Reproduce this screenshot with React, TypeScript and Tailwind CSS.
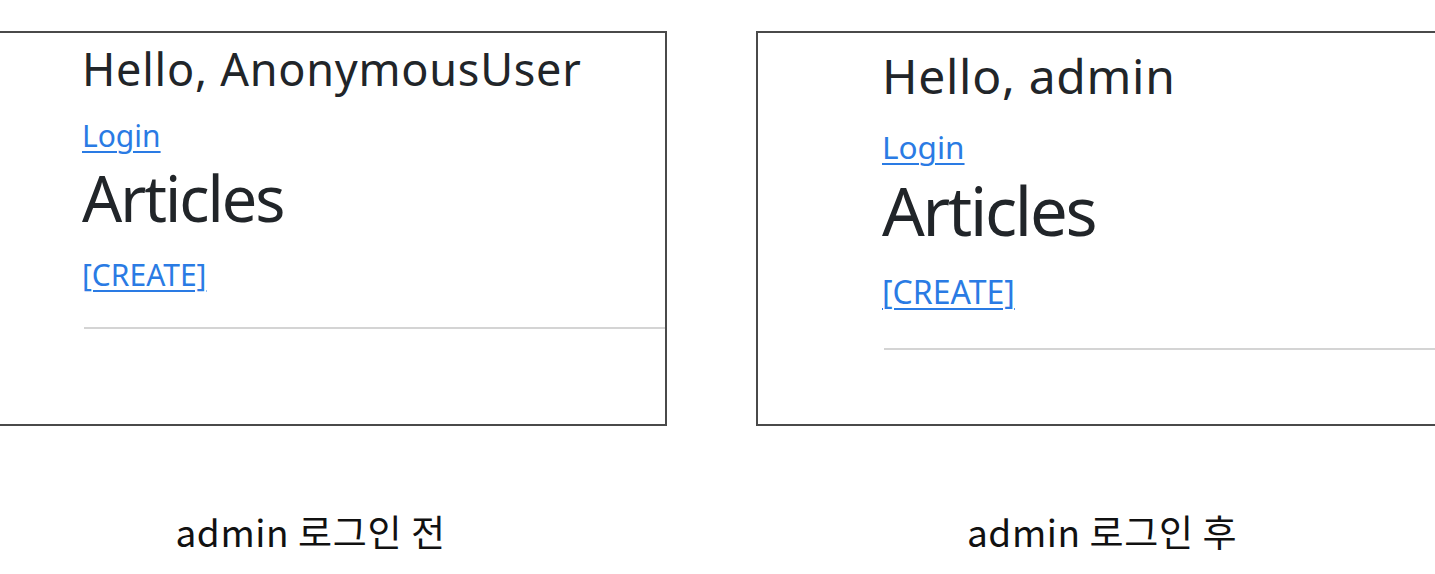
const panelFont = { fontFamily: '"Noto Sans", "Open Sans", sans-serif' };
const captionFont = { fontFamily: '"Noto Sans CJK KR", "Noto Sans", sans-serif' };

function BeforePanel() {
  return (
    <div className="flex flex-col w-[713px] -ml-[46px] shrink-0">
      <div className="h-[395px] border-2 border-[#4a4a4a] bg-white pl-[126px] pt-[9px]" style={panelFont}>
        <h3 className="text-[45px] leading-[54px] tracking-[0.75px] text-[#212529]">Hello, AnonymousUser</h3>
        <a href="#" className="block mt-[22px] text-[30px] leading-[36px] text-[#2a7be4] underline decoration-[2px] underline-offset-[4px]">
          Login
        </a>
        <h1 className="mt-[6px] text-[63px] leading-[76px] tracking-[-2px] text-[#212529]">Articles</h1>
        <a href="#" className="block mt-[21px] text-[30px] leading-[36px] text-[#2a7be4] underline decoration-[2px] underline-offset-[4px]">
          [CREATE]
        </a>
        <hr className="mt-[34px] ml-[2px] border-t-2 border-[#d4d4d4]" />
      </div>
      <p className="mt-[83px] text-center text-[37px] leading-[44px] tracking-[0.6px] text-[#111]" style={captionFont}>
        admin 로그인 전
      </p>
    </div>
  );
}

function AfterPanel() {
  return (
    <div className="flex flex-col w-[692px] shrink-0">
      <div className="h-[395px] border-2 border-[#4a4a4a] bg-white pl-[124px] pt-[14px]" style={panelFont}>
        <h3 className="text-[48px] leading-[58px] tracking-[0.7px] text-[#212529]">Hello, admin</h3>
        <a href="#" className="block mt-[23px] text-[31.5px] leading-[38px] text-[#2a7be4] underline decoration-[2px] underline-offset-[4px]">
          Login
        </a>
        <h1 className="mt-[4px] text-[67px] leading-[80px] tracking-[-2.25px] text-[#212529]">Articles</h1>
        <a href="#" className="block mt-[23px] text-[32px] leading-[38px] text-[#2a7be4] underline decoration-[2px] underline-offset-[4px]">
          [CREATE]
        </a>
        <hr className="mt-[37px] ml-[2px] border-t-2 border-[#d4d4d4]" />
      </div>
      <p className="mt-[83px] text-center text-[37px] leading-[44px] tracking-[0.6px] text-[#111]" style={captionFont}>
        admin 로그인 후
      </p>
    </div>
  );
}

export default function App() {
  return (
    <div className="w-[1435px] h-[574px] overflow-hidden bg-white">
      <div className="flex gap-[89px] pt-[31px]">
        <BeforePanel />
        <AfterPanel />
      </div>
    </div>
  );
}
